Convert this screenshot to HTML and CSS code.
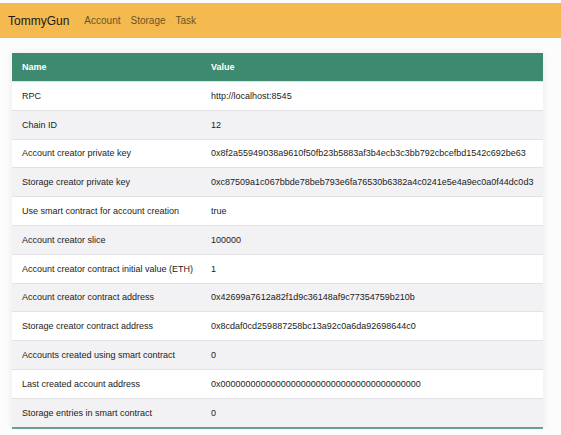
FILE: index.html
```html
<!DOCTYPE html>
<html lang="en">
<head>
  <meta charset="UTF-8">
  <title>TommyGun</title>
  <link rel="stylesheet" href="styles.css">
</head>
<body>
  <nav class="navbar">
    <span class="brand">TommyGun</span>
    <a class="nav-link" href="#">Account</a>
    <a class="nav-link" href="#">Storage</a>
    <a class="nav-link" href="#">Task</a>
  </nav>

  <div class="panel">
    <table class="config">
      <thead>
        <tr><th class="col-name">Name</th><th>Value</th></tr>
      </thead>
      <tbody>
        <tr><td>RPC</td><td>http://localhost:8545</td></tr>
        <tr><td>Chain ID</td><td>12</td></tr>
        <tr><td>Account creator private key</td><td>0x8f2a55949038a9610f50fb23b5883af3b4ecb3c3bb792cbcefbd1542c692be63</td></tr>
        <tr><td>Storage creator private key</td><td>0xc87509a1c067bbde78beb793e6fa76530b6382a4c0241e5e4a9ec0a0f44dc0d3</td></tr>
        <tr><td>Use smart contract for account creation</td><td>true</td></tr>
        <tr><td>Account creator slice</td><td>100000</td></tr>
        <tr><td>Account creator contract initial value (ETH)</td><td>1</td></tr>
        <tr><td>Account creator contract address</td><td>0x42699a7612a82f1d9c36148af9c77354759b210b</td></tr>
        <tr><td>Storage creator contract address</td><td>0x8cdaf0cd259887258bc13a92c0a6da92698644c0</td></tr>
        <tr><td>Accounts created using smart contract</td><td>0</td></tr>
        <tr><td>Last created account address</td><td>0x0000000000000000000000000000000000000000</td></tr>
        <tr><td>Storage entries in smart contract</td><td>0</td></tr>
      </tbody>
    </table>
  </div>
</body>
</html>
```

FILE: styles.css
```css
/* ---- page ---- */
body {
  margin: 0; padding-top: 3px;
  background: #fdfcfd; color: #222;
  font-family: "Liberation Sans", Arial, sans-serif;
}

/* ---- top bar ---- */
.navbar {
  display: flex; align-items: center;
  height: 35px; padding-left: 8px;
  background: #f4b94f;
}
.brand { font-size: 12px; color: #1d1a14; margin-right: 15px; }
.nav-link { font-size: 10px; color: #6a5527; text-decoration: none; margin-right: 10px; }

/* ---- settings table ---- */
.panel {
  margin: 15px 0 0 12px; width: 531px;
  box-shadow: 0 0 8px rgba(0,0,0,0.08);
}
.config { width: 100%; border-collapse: collapse; font-size: 9px; }
.config th {
  background: #3d8a70; color: #fff; text-align: left;
  font-weight: bold; height: 28px; padding: 0 10px;
}
.config td {
  height: 27.8px; padding: 0 10px;
  border-top: 1px solid #e2e1e5; white-space: nowrap;
}
.config th:first-child,
.config td:first-child { padding-right: 8px; }
.col-name { width: 165px; }
.config tbody tr:nth-child(even) td { background: #f2f1f4; }
.config tbody tr:nth-child(odd) td { background: #fff; }
.config tbody tr:last-child td { border-bottom: 2px solid #6a9f8f; }
```
